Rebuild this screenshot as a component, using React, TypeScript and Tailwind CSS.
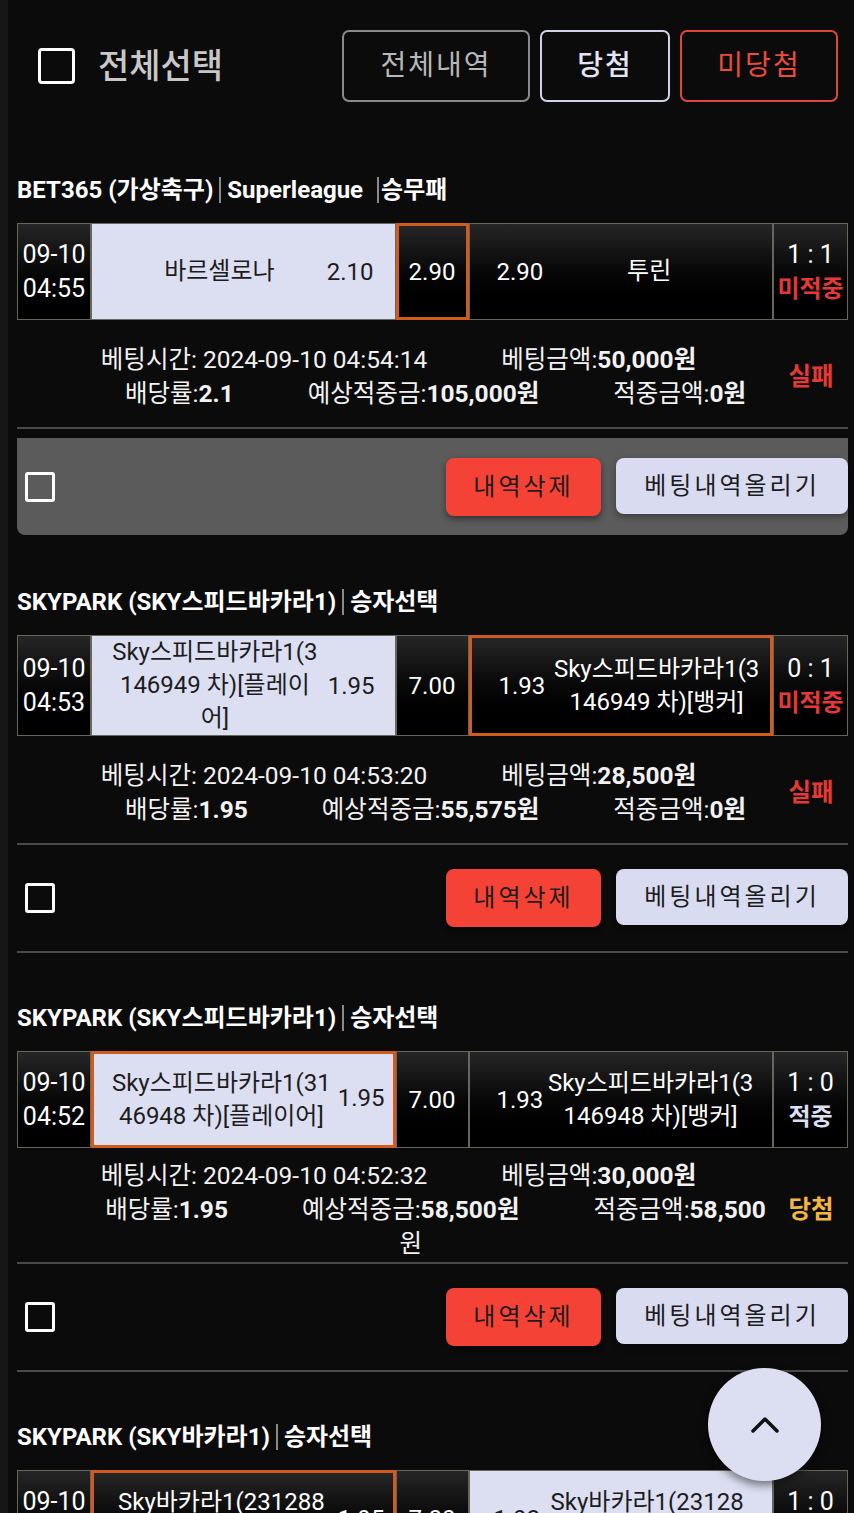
import type { ReactNode } from 'react';

interface Side {
    name: ReactNode;
    odds: string;
    light?: boolean;
    picked?: boolean;
    namePad: string;
    oddsPad: string;
}

interface Bet {
    title: ReactNode;
    date: string;
    time: string;
    home: Side;
    draw: { odds: string; picked?: boolean };
    away: Side;
    score: string;
    result: 'hit' | 'miss';
    betTime: string;
    amount: string;
    rate: string;
    expected: ReactNode;
    winAmount: string;
    status: 'win' | 'lose';
    infoPad: string;
    active?: boolean;
}

const Sep = ({ className = 'mx-[6px]' }: { className?: string }) => (
    <span className={`inline-block h-[26px] w-[2px] bg-[#8a8a8a] ${className}`} />
);

const cellStyle = (light?: boolean, picked?: boolean) =>
    `${light ? 'bg-[#dcdff2] text-[#1c1c1c]' : 'bg-linear-to-b from-[#262626] to-black text-white'} ${
        picked ? 'border-[3px] border-[#cf5c1c]' : 'border border-[#67665a]'
    }`;

const bets: Bet[] = [
    {
        title: (
            <>
                BET365 (가상축구)
                <Sep />
                Superleague
                <Sep className="ml-[14px] mr-[2px]" />
                승무패
            </>
        ),
        date: '09-10',
        time: '04:55',
        home: { name: '바르셀로나', odds: '2.10', light: true, namePad: 'pl-[30px]', oddsPad: 'pl-[10px] pr-[21px]' },
        draw: { odds: '2.90', picked: true },
        away: { name: '투린', odds: '2.90', namePad: 'pr-[17px]', oddsPad: 'pl-[27px]' },
        score: '1 : 1',
        result: 'miss',
        betTime: '2024-09-10 04:54:14',
        amount: '50,000원',
        rate: '2.1',
        expected: '105,000원',
        winAmount: '0원',
        status: 'lose',
        infoPad: 'min-h-[107px] pt-[6px]',
        active: true,
    },
    {
        title: (
            <>
                SKYPARK (SKY스피드바카라1)
                <Sep />
                승자선택
            </>
        ),
        date: '09-10',
        time: '04:53',
        home: {
            name: (
                <>
                    Sky스피드바카라1(3
                    <br />
                    146949 차)[플레이
                    <br />
                    어]
                </>
            ),
            odds: '1.95',
            light: true,
            namePad: 'pl-[14px]',
            oddsPad: 'pl-[4px] pr-[20px]',
        },
        draw: { odds: '7.00' },
        away: {
            name: (
                <>
                    Sky스피드바카라1(3
                    <br />
                    146949 차)[뱅커]
                </>
            ),
            odds: '1.93',
            picked: true,
            namePad: 'pl-[4px] pr-[6px]',
            oddsPad: 'pl-[27px]',
        },
        score: '0 : 1',
        result: 'miss',
        betTime: '2024-09-10 04:53:20',
        amount: '28,500원',
        rate: '1.95',
        expected: '55,575원',
        winAmount: '0원',
        status: 'lose',
        infoPad: 'min-h-[107px] pt-[6px]',
    },
    {
        title: (
            <>
                SKYPARK (SKY스피드바카라1)
                <Sep />
                승자선택
            </>
        ),
        date: '09-10',
        time: '04:52',
        home: {
            name: (
                <>
                    Sky스피드바카라1(31
                    <br />
                    46948 차)[플레이어]
                </>
            ),
            odds: '1.95',
            light: true,
            picked: true,
            namePad: 'pl-[15px]',
            oddsPad: 'pl-[4px] pr-[8px] pb-[4px]',
        },
        draw: { odds: '7.00' },
        away: {
            name: (
                <>
                    Sky스피드바카라1(3
                    <br />
                    146948 차)[뱅커]
                </>
            ),
            odds: '1.93',
            namePad: 'pl-[2px] pr-[16px]',
            oddsPad: 'pl-[27px]',
        },
        score: '1 : 0',
        result: 'hit',
        betTime: '2024-09-10 04:52:32',
        amount: '30,000원',
        rate: '1.95',
        expected: (
            <>
                <span>
                    예상적중금:<b>58,500원</b>
                </span>
                <span>원</span>
            </>
        ),
        winAmount: '58,500',
        status: 'win',
        infoPad: 'min-h-[107px] pt-[11px] pb-[1px]',
    },
    {
        title: (
            <>
                SKYPARK (SKY바카라1)
                <Sep />
                승자선택
            </>
        ),
        date: '09-10',
        time: '04:51',
        home: {
            name: (
                <>
                    Sky바카라1(231288
                    <br />
                    7 차)[플레이어]
                </>
            ),
            odds: '1.95',
            picked: true,
            namePad: 'pl-[15px]',
            oddsPad: 'pl-[4px] pr-[8px]',
        },
        draw: { odds: '7.00' },
        away: {
            name: (
                <>
                    Sky바카라1(23128
                    <br />
                    87 차)[뱅커]
                </>
            ),
            odds: '1.93',
            light: true,
            namePad: 'pr-[18px]',
            oddsPad: 'pl-[24px]',
        },
        score: '1 : 0',
        result: 'miss',
        betTime: '2024-09-10 04:51:40',
        amount: '20,000원',
        rate: '1.95',
        expected: '39,000원',
        winAmount: '0원',
        status: 'lose',
        infoPad: 'min-h-[107px] pt-[6px]',
    },
];

const Box = ({ size }: { size: 'lg' | 'sm' }) => (
    <span
        className={`inline-block shrink-0 border-white ${
            size === 'lg' ? 'h-[36px] w-[37px] rounded-[4px] border-[3.5px]' : 'h-[30px] w-[30px] rounded-[3px] border-[3px]'
        }`}
    />
);

const BetRow = ({ bet }: { bet: Bet }) => (
    <div className="grid grid-cols-[74px_1fr_73px_1fr_75px] text-[24px]">
        <div className={`flex min-h-[97px] flex-col items-center justify-center text-[25px] leading-[34px] ${cellStyle()}`}>
            <span>{bet.date}</span>
            <span>{bet.time}</span>
        </div>

        {/* home side */}
        <div className={`flex min-w-0 items-center ${cellStyle(bet.home.light, bet.home.picked)}`}>
            <div className={`flex-1 whitespace-nowrap text-center leading-[33px] ${bet.home.namePad}`}>{bet.home.name}</div>
            <div className={bet.home.oddsPad}>{bet.home.odds}</div>
        </div>

        <div className={`flex items-center justify-center ${cellStyle(false, bet.draw.picked)}`}>{bet.draw.odds}</div>

        {/* away side */}
        <div className={`flex min-w-0 items-center ${cellStyle(bet.away.light, bet.away.picked)}`}>
            <div className={bet.away.oddsPad}>{bet.away.odds}</div>
            <div className={`flex-1 whitespace-nowrap text-center leading-[33px] ${bet.away.namePad}`}>{bet.away.name}</div>
        </div>

        <div className={`flex flex-col items-center justify-center leading-[34px] ${cellStyle()}`}>
            <span className="text-[25px]">{bet.score}</span>
            <span className={`font-bold ${bet.result === 'hit' ? 'text-[#dcdff2]' : 'text-[#e53935]'}`}>
                {bet.result === 'hit' ? '적중' : '미적중'}
            </span>
        </div>
    </div>
);

const BetBlock = ({ bet }: { bet: Bet }) => (
    <section className="pt-[48px]">
        <h3 className="flex h-[34px] items-center whitespace-nowrap text-[24px] font-bold text-white">{bet.title}</h3>

        <div className="mt-[16px]">
            <BetRow bet={bet} />
        </div>

        <div className={`flex items-center text-[24.5px] leading-[34px] text-[#f2f2f2] ${bet.infoPad}`}>
            <div className="w-[763px] shrink-0">
                <div className="flex justify-center gap-[74px] whitespace-nowrap">
                    <span>베팅시간: {bet.betTime}</span>
                    <span>
                        베팅금액:<b>{bet.amount}</b>
                    </span>
                </div>
                <div className="flex items-start justify-center gap-[74px] whitespace-nowrap pl-[74px]">
                    <span>
                        배당률:<b>{bet.rate}</b>
                    </span>
                    {typeof bet.expected === 'string' ? (
                        <span>
                            예상적중금:<b>{bet.expected}</b>
                        </span>
                    ) : (
                        <span className="flex flex-col items-center">{bet.expected}</span>
                    )}
                    <span>
                        적중금액:<b>{bet.winAmount}</b>
                    </span>
                </div>
            </div>
            <div className={`flex-1 pr-[6px] text-center font-bold ${bet.status === 'win' ? 'text-[#f4b63f]' : 'text-[#e53935]'}`}>
                {bet.status === 'win' ? '당첨' : '실패'}
            </div>
        </div>

        <div className={`border-y-2 border-[#4a4a4a] ${bet.active ? 'border-b-transparent pt-[9px]' : ''}`}>
            <div
                className={`flex items-center justify-between pl-[8px] ${
                    bet.active ? 'h-[97px] rounded-b-[8px] bg-[#5b5b5b]' : 'h-[106px]'
                }`}
            >
                <Box size="sm" />
                <div className="flex gap-[15px] text-[24px] tracking-[3px] text-[#1c1c1c]">
                    <button className="h-[58px] w-[155px] rounded-[8px] bg-[#f44336] shadow-[0_3px_6px_rgba(0,0,0,0.45)]">
                        내역삭제
                    </button>
                    <button className="h-[56px] w-[232px] rounded-[8px] bg-[#d9dcf0] shadow-[0_3px_6px_rgba(0,0,0,0.35)]">
                        베팅내역올리기
                    </button>
                </div>
            </div>
        </div>
    </section>
);

export default function App() {
    return (
        <div
            className="relative h-[1513px] overflow-hidden border-l-[8px] border-[#161616] bg-[#0b0b0b] pl-[9px] pr-[6px]"
            style={{ fontFamily: 'Roboto, "Noto Sans CJK KR", sans-serif' }}
        >
            <header className="flex h-[125px] items-start justify-between pt-[30px]">
                <div className="ml-[21px] flex h-[72px] items-center gap-[23px]">
                    <Box size="lg" />
                    <span className="text-[34px] font-medium text-[#c8c8c8]">전체선택</span>
                </div>
                <div className="mr-[10px] flex gap-[10px] text-[28px] tracking-[2px]">
                    <button className="h-[72px] w-[188px] rounded-[7px] border-2 border-[#8a8a8a] text-[#b8b8b8]">전체내역</button>
                    <button className="h-[72px] w-[130px] rounded-[7px] border-2 border-[#cfd3e8] font-medium text-[#e2e5f6]">
                        당첨
                    </button>
                    <button className="h-[72px] w-[158px] rounded-[7px] border-2 border-[#e0463b] text-[#ea4b3d]">미당첨</button>
                </div>
            </header>

            {bets.map((bet, i) => (
                <BetBlock key={i} bet={bet} />
            ))}

            <button className="absolute bottom-[32px] right-[33px] flex h-[113px] w-[113px] items-center justify-center rounded-full bg-[#dcdff2] shadow-[0_4px_10px_rgba(0,0,0,0.5)]">
                <svg width="28" height="16" viewBox="0 0 28 16" fill="none">
                    <path d="M2 14 L14 2 L26 14" stroke="#111" strokeWidth="3.5" strokeLinecap="round" strokeLinejoin="round" />
                </svg>
            </button>
        </div>
    );
}
